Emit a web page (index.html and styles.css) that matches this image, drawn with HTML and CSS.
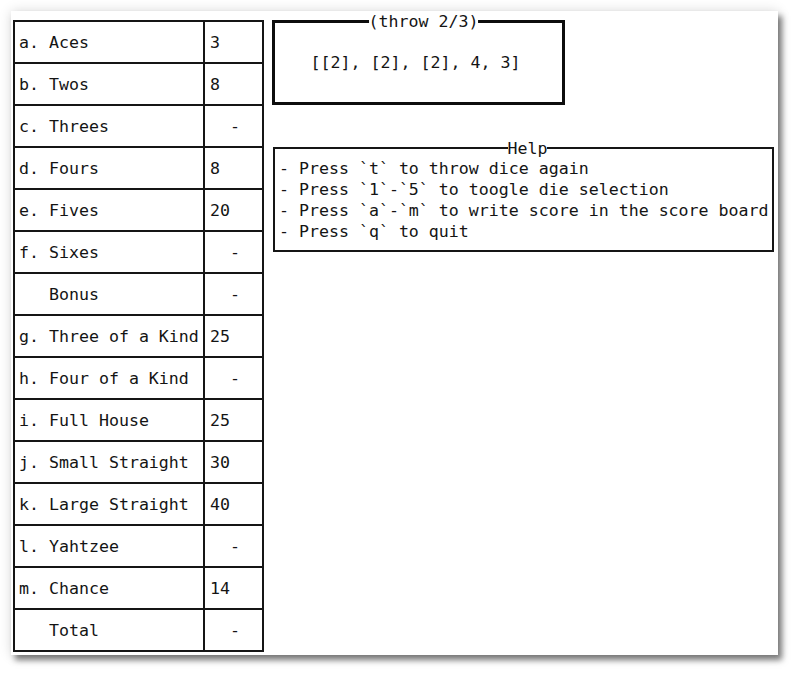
FILE: index.html
```html
<!DOCTYPE html>
<html>
<head>
<meta charset="utf-8">
<link rel="stylesheet" href="styles.css">
</head>
<body>
<div class="window">
  <div class="board">
    <div class="cell label">a. Aces</div><div class="cell value">3</div>
    <div class="cell label">b. Twos</div><div class="cell value">8</div>
    <div class="cell label">c. Threes</div><div class="cell value">  -</div>
    <div class="cell label">d. Fours</div><div class="cell value">8</div>
    <div class="cell label">e. Fives</div><div class="cell value">20</div>
    <div class="cell label">f. Sixes</div><div class="cell value">  -</div>
    <div class="cell label">   Bonus</div><div class="cell value">  -</div>
    <div class="cell label">g. Three of a Kind</div><div class="cell value">25</div>
    <div class="cell label">h. Four of a Kind</div><div class="cell value">  -</div>
    <div class="cell label">i. Full House</div><div class="cell value">25</div>
    <div class="cell label">j. Small Straight</div><div class="cell value">30</div>
    <div class="cell label">k. Large Straight</div><div class="cell value">40</div>
    <div class="cell label">l. Yahtzee</div><div class="cell value">  -</div>
    <div class="cell label">m. Chance</div><div class="cell value">14</div>
    <div class="cell label">   Total</div><div class="cell value">  -</div>
  </div>
  <div class="side">
    <div class="throw">
      <span class="title">(throw 2/3)</span>
      <div class="dice">[[2], [2], [2], 4, 3]</div>
    </div>
    <div class="help">
      <span class="title">Help</span>
      <div class="line">- Press `t` to throw dice again</div>
      <div class="line">- Press `1`-`5` to toogle die selection</div>
      <div class="line">- Press `a`-`m` to write score in the score board</div>
      <div class="line">- Press `q` to quit</div>
    </div>
  </div>
</div>
</body>
</html>
```

FILE: styles.css
```css
html, body {
  margin: 0;
  padding: 0;
  background: #ffffff;
}
body {
  font-family: "DejaVu Sans Mono", "Liberation Mono", monospace;
  font-size: 16.6px;
  color: #141414;
  height: 674px;
}
.window {
  margin: 11px 0 0 11px;
  width: 767px;
  height: 644px;
  background: #fff;
  box-shadow: 4px 5px 6px rgba(0,0,0,0.5), 0 0 12px rgba(0,0,0,0.14);
  display: flex;
  align-items: flex-start;
  padding: 9px 0 0 2px;
  box-sizing: border-box;
  gap: 8px;
}
.board {
  display: grid;
  grid-template-columns: 190px 59px;
  grid-auto-rows: 42px;
  border-left: 2px solid #151515;
  border-top: 2px solid #151515;
}
.cell {
  border-right: 2px solid #151515;
  border-bottom: 2px solid #151515;
  white-space: pre;
  display: flex;
  align-items: center;
  line-height: 21px;
}
.label { padding-left: 4px; }
.value { padding-left: 5px; }
.side {
  display: flex;
  flex-direction: column;
  align-items: flex-start;
}
.throw {
  position: relative;
  width: 293px;
  height: 85px;
  box-sizing: border-box;
  border: 3px solid #0d0d0d;
  display: flex;
  align-items: center;
  justify-content: center;
}
.dice {
  white-space: pre;
  line-height: 21px;
  margin-left: -6px;
}
.title {
  position: absolute;
  top: -12px;
  left: 50%;
  transform: translateX(-50%);
  background: #fff;
  line-height: 21px;
  white-space: pre;
}
.throw .title { margin-left: 5px; }
.help .title { top: -11px; margin-left: 4px; }
.help {
  position: relative;
  margin-top: 42px;
  margin-left: 1px;
  width: 501px;
  height: 105px;
  box-sizing: border-box;
  border: 2px solid #151515;
  padding: 9px 0 0 4px;
}
.line {
  white-space: pre;
  line-height: 21px;
}
```
